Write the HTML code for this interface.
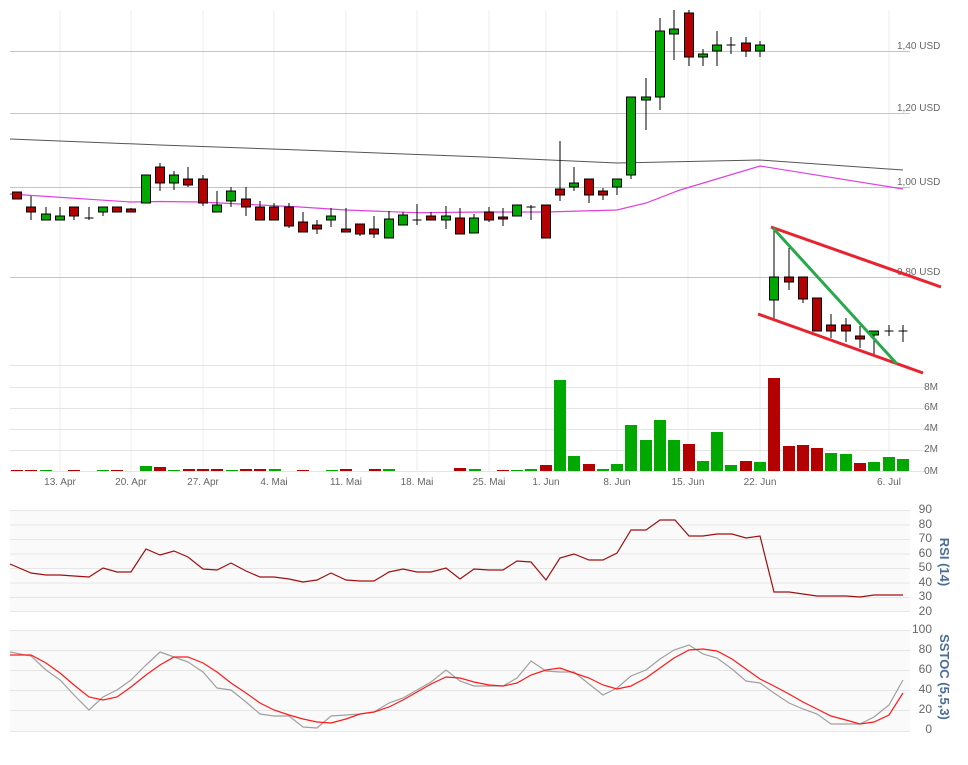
<!DOCTYPE html>
<html><head><meta charset="utf-8"><style>
html,body{margin:0;padding:0;background:#fff;width:968px;height:765px;overflow:hidden}
svg{display:block;font-family:"Liberation Sans",sans-serif}
</style></head><body>
<svg width="968" height="765" viewBox="0 0 968 765" xmlns="http://www.w3.org/2000/svg">
<!-- vertical grid -->
<g stroke="#ececec" stroke-width="1">
<line x1="60" y1="10" x2="60" y2="472"/><line x1="131" y1="10" x2="131" y2="472"/><line x1="203" y1="10" x2="203" y2="472"/><line x1="274" y1="10" x2="274" y2="472"/><line x1="346" y1="10" x2="346" y2="472"/><line x1="417" y1="10" x2="417" y2="472"/><line x1="489" y1="10" x2="489" y2="472"/><line x1="546" y1="10" x2="546" y2="472"/><line x1="617" y1="10" x2="617" y2="472"/><line x1="688" y1="10" x2="688" y2="472"/><line x1="760" y1="10" x2="760" y2="472"/><line x1="889" y1="10" x2="889" y2="472"/>
</g>
<!-- horizontal grid main -->
<g stroke="#c4c4c4" stroke-width="1">
<line x1="10" y1="51.5" x2="910" y2="51.5"/><line x1="10" y1="113.5" x2="910" y2="113.5"/><line x1="10" y1="187.5" x2="910" y2="187.5"/><line x1="10" y1="277.5" x2="910" y2="277.5"/>
</g>
<g stroke="#e4e4e4" stroke-width="1">
<line x1="10" y1="365.5" x2="910" y2="365.5"/><line x1="10" y1="387.5" x2="926" y2="387.5"/><line x1="10" y1="408.5" x2="926" y2="408.5"/><line x1="10" y1="429.5" x2="926" y2="429.5"/><line x1="10" y1="450.5" x2="926" y2="450.5"/><line x1="10" y1="471.5" x2="926" y2="471.5"/>
</g>
<!-- axis labels -->
<g fill="#666" font-size="10">
<text x="897" y="49">1,40 USD</text><text x="897" y="111">1,20 USD</text><text x="897" y="185">1,00 USD</text><text x="897" y="275">0,80 USD</text>
</g>
<g fill="#666" font-size="10" text-anchor="end">
<text x="938" y="390">8M</text><text x="938" y="410">6M</text><text x="938" y="431">4M</text><text x="938" y="452">2M</text><text x="938" y="474">0M</text>
</g>
<g fill="#666" font-size="10" text-anchor="middle">
<text x="60" y="485">13. Apr</text><text x="131" y="485">20. Apr</text><text x="203" y="485">27. Apr</text><text x="274" y="485">4. Mai</text><text x="346" y="485">11. Mai</text><text x="417" y="485">18. Mai</text><text x="489" y="485">25. Mai</text><text x="546" y="485">1. Jun</text><text x="617" y="485">8. Jun</text><text x="688" y="485">15. Jun</text><text x="760" y="485">22. Jun</text><text x="889" y="485">6. Jul</text>
</g>
<!-- moving averages -->
<polyline fill="none" stroke="#555" stroke-width="1" points="10,139 160,145 300,150 484,157 617,163 760,160 903,170"/>
<polyline fill="none" stroke="#e040e0" stroke-width="1.2" points="10,194 131,202 160,201.5 200,202 300,207 346,210 417,212.7 484,212 546,212 617,210 646,203 680,190 760,166 903,189"/>
<!-- wicks -->
<g stroke="#000" stroke-width="1">
<line x1="31" y1="196" x2="31" y2="220"/><line x1="46" y1="207" x2="46" y2="220"/><line x1="60" y1="207" x2="60" y2="220"/><line x1="74" y1="207" x2="74" y2="220"/><line x1="89" y1="207" x2="89" y2="220"/><line x1="103" y1="207" x2="103" y2="216"/><line x1="131" y1="208" x2="131" y2="212"/><line x1="160" y1="163" x2="160" y2="191"/><line x1="174" y1="171" x2="174" y2="190"/><line x1="188" y1="167" x2="188" y2="187"/><line x1="203" y1="175" x2="203" y2="206"/><line x1="217" y1="191" x2="217" y2="212"/><line x1="231" y1="187" x2="231" y2="207"/><line x1="246" y1="187" x2="246" y2="216"/><line x1="260" y1="201" x2="260" y2="220"/><line x1="274" y1="203" x2="274" y2="220"/><line x1="289" y1="203" x2="289" y2="228"/><line x1="303" y1="212" x2="303" y2="232"/><line x1="317" y1="220" x2="317" y2="234"/><line x1="331" y1="208" x2="331" y2="227"/><line x1="346" y1="208" x2="346" y2="232"/><line x1="360" y1="224" x2="360" y2="236"/><line x1="374" y1="216" x2="374" y2="238"/><line x1="389" y1="211" x2="389" y2="238"/><line x1="403" y1="212" x2="403" y2="225"/><line x1="417" y1="204" x2="417" y2="225"/><line x1="431" y1="212" x2="431" y2="220"/><line x1="446" y1="206" x2="446" y2="229"/><line x1="460" y1="208" x2="460" y2="234"/><line x1="474" y1="214" x2="474" y2="233"/><line x1="489" y1="207" x2="489" y2="222"/><line x1="503" y1="208" x2="503" y2="226"/><line x1="531" y1="205" x2="531" y2="220"/><line x1="560" y1="141" x2="560" y2="201"/><line x1="574" y1="167" x2="574" y2="191"/><line x1="589" y1="179" x2="589" y2="203"/><line x1="603" y1="188" x2="603" y2="200"/><line x1="617" y1="179" x2="617" y2="195"/><line x1="631" y1="97" x2="631" y2="179"/><line x1="646" y1="78" x2="646" y2="130"/><line x1="660" y1="18" x2="660" y2="110"/><line x1="674" y1="10" x2="674" y2="60"/><line x1="689" y1="10" x2="689" y2="66"/><line x1="703" y1="49" x2="703" y2="66"/><line x1="717" y1="31" x2="717" y2="66"/><line x1="731" y1="37" x2="731" y2="54"/><line x1="746" y1="37" x2="746" y2="57"/><line x1="760" y1="41" x2="760" y2="57"/><line x1="774" y1="228" x2="774" y2="320"/><line x1="789" y1="248" x2="789" y2="290"/><line x1="803" y1="277" x2="803" y2="303"/><line x1="831" y1="314" x2="831" y2="338"/><line x1="846" y1="318" x2="846" y2="342"/><line x1="860" y1="326" x2="860" y2="348"/><line x1="874" y1="331" x2="874" y2="355"/><line x1="889" y1="325" x2="889" y2="336"/><line x1="903" y1="325" x2="903" y2="342"/>
<line x1="84.5" y1="218" x2="93.5" y2="218"/><line x1="412.5" y1="220" x2="421.5" y2="220"/><line x1="526.5" y1="207" x2="535.5" y2="207"/><line x1="726.5" y1="45" x2="735.5" y2="45"/><line x1="884.5" y1="331" x2="893.5" y2="331"/><line x1="898.5" y1="331" x2="907.5" y2="331"/>
</g>
<!-- bodies red -->
<g fill="#b30000" stroke="#000" stroke-width="1">
<rect x="12.5" y="192" width="9" height="7"/><rect x="26.5" y="207" width="9" height="5"/><rect x="69.5" y="207" width="9" height="9"/><rect x="112.5" y="207" width="9" height="5"/><rect x="126.5" y="209" width="9" height="3"/><rect x="155.5" y="167" width="9" height="16"/><rect x="183.5" y="179" width="9" height="6"/><rect x="198.5" y="179" width="9" height="24"/><rect x="241.5" y="199" width="9" height="8"/><rect x="255.5" y="207" width="9" height="13"/><rect x="269.5" y="207" width="9" height="13"/><rect x="284.5" y="207" width="9" height="19"/><rect x="298.5" y="222" width="9" height="10"/><rect x="312.5" y="225" width="9" height="4"/><rect x="341.5" y="229" width="9" height="3"/><rect x="355.5" y="224" width="9" height="10"/><rect x="369.5" y="229" width="9" height="5"/><rect x="426.5" y="216" width="9" height="4"/><rect x="455.5" y="218" width="9" height="16"/><rect x="484.5" y="212" width="9" height="8"/><rect x="498.5" y="217" width="9" height="2"/><rect x="541.5" y="205" width="9" height="33"/><rect x="555.5" y="189" width="9" height="6"/><rect x="584.5" y="179" width="9" height="16"/><rect x="598.5" y="191" width="9" height="4"/><rect x="684.5" y="13" width="9" height="44"/><rect x="741.5" y="43" width="9" height="8"/><rect x="784.5" y="277" width="9" height="5"/><rect x="798.5" y="277" width="9" height="22"/><rect x="812.5" y="298" width="9" height="33"/><rect x="826.5" y="325" width="9" height="6"/><rect x="841.5" y="325" width="9" height="6"/><rect x="855.5" y="336" width="9" height="3"/>
</g>
<!-- bodies green -->
<g fill="#00a800" stroke="#000" stroke-width="1">
<rect x="41.5" y="214" width="9" height="6"/><rect x="55.5" y="216" width="9" height="4"/><rect x="98.5" y="207" width="9" height="5"/><rect x="141.5" y="175" width="9" height="28"/><rect x="169.5" y="175" width="9" height="8"/><rect x="212.5" y="205" width="9" height="7"/><rect x="226.5" y="191" width="9" height="10"/><rect x="326.5" y="216" width="9" height="4"/><rect x="384.5" y="219" width="9" height="19"/><rect x="398.5" y="215" width="9" height="10"/><rect x="441.5" y="216" width="9" height="4"/><rect x="469.5" y="218" width="9" height="15"/><rect x="512.5" y="205" width="9" height="11"/><rect x="569.5" y="183" width="9" height="4"/><rect x="612.5" y="179" width="9" height="8"/><rect x="626.5" y="97" width="9" height="78"/><rect x="641.5" y="97" width="9" height="3"/><rect x="655.5" y="31" width="9" height="66"/><rect x="669.5" y="29" width="9" height="5"/><rect x="698.5" y="54" width="9" height="3"/><rect x="712.5" y="45" width="9" height="6"/><rect x="755.5" y="45" width="9" height="6"/><rect x="769.5" y="277" width="9" height="23"/><rect x="869.5" y="331" width="9" height="4"/>
</g>
<!-- trend lines -->
<line x1="771" y1="227" x2="941" y2="287" stroke="#e8222e" stroke-width="3"/>
<line x1="758" y1="314" x2="923" y2="373" stroke="#e8222e" stroke-width="3"/>
<line x1="773" y1="228" x2="897" y2="364" stroke="#27a84a" stroke-width="3"/>
<!-- volume -->
<g fill="#00a800">
<rect x="40" y="470" width="12" height="1"/><rect x="97" y="470" width="12" height="1"/><rect x="140" y="466" width="12" height="5"/><rect x="168" y="470" width="12" height="1"/><rect x="226" y="470" width="12" height="1"/><rect x="269" y="469" width="12" height="2"/><rect x="326" y="470" width="12" height="1"/><rect x="383" y="469" width="12" height="2"/><rect x="469" y="469" width="12" height="2"/><rect x="511" y="470" width="12" height="1"/><rect x="525" y="469" width="12" height="2"/>
<rect x="554" y="380" width="12" height="91"/><rect x="568" y="456" width="12" height="15"/><rect x="597" y="469" width="12" height="2"/><rect x="611" y="464" width="12" height="7"/><rect x="625" y="425" width="12" height="46"/><rect x="640" y="440" width="12" height="31"/><rect x="654" y="420" width="12" height="51"/><rect x="668" y="440" width="12" height="31"/><rect x="697" y="461" width="12" height="10"/><rect x="711" y="432" width="12" height="39"/><rect x="725" y="465" width="12" height="6"/><rect x="754" y="462" width="12" height="9"/><rect x="825" y="453" width="12" height="18"/><rect x="840" y="454" width="12" height="17"/><rect x="868" y="462" width="12" height="9"/><rect x="883" y="457" width="12" height="14"/><rect x="897" y="459" width="12" height="12"/>
</g>
<g fill="#b30000">
<rect x="11" y="470" width="12" height="1"/><rect x="25" y="470" width="12" height="1"/><rect x="68" y="470" width="12" height="1"/><rect x="111" y="470" width="12" height="1"/><rect x="154" y="467" width="12" height="4"/><rect x="183" y="469" width="12" height="2"/><rect x="197" y="469" width="12" height="2"/><rect x="211" y="469" width="12" height="2"/><rect x="240" y="469" width="12" height="2"/><rect x="254" y="469" width="12" height="2"/><rect x="297" y="470" width="12" height="1"/><rect x="340" y="469" width="12" height="2"/><rect x="369" y="469" width="12" height="2"/><rect x="454" y="468" width="12" height="3"/><rect x="497" y="470" width="12" height="1"/>
<rect x="540" y="465" width="12" height="6"/><rect x="583" y="464" width="12" height="7"/><rect x="683" y="444" width="12" height="27"/><rect x="740" y="461" width="12" height="10"/><rect x="768" y="378" width="12" height="93"/><rect x="783" y="446" width="12" height="25"/><rect x="797" y="445" width="12" height="26"/><rect x="811" y="448" width="12" height="23"/><rect x="854" y="463" width="12" height="8"/>
</g>
<!-- RSI panel -->
<rect x="10" y="510" width="900" height="102" fill="#fafafa"/>
<g stroke="#e6e6e6" stroke-width="1">
<line x1="10" y1="510.5" x2="910" y2="510.5"/><line x1="10" y1="525" x2="910" y2="525"/><line x1="10" y1="539.5" x2="910" y2="539.5"/><line x1="10" y1="554" x2="910" y2="554"/><line x1="10" y1="568.5" x2="910" y2="568.5"/><line x1="10" y1="583" x2="910" y2="583"/><line x1="10" y1="597.5" x2="910" y2="597.5"/><line x1="10" y1="611.5" x2="910" y2="611.5"/>
</g>
<g fill="#666" font-size="12" text-anchor="end">
<text x="932" y="513">90</text><text x="932" y="528">80</text><text x="932" y="542">70</text><text x="932" y="557">60</text><text x="932" y="571">50</text><text x="932" y="586">40</text><text x="932" y="600">30</text><text x="932" y="615">20</text>
</g>
<text transform="translate(940,562) rotate(90)" text-anchor="middle" fill="#4a6d9a" font-size="13" font-weight="bold">RSI (14)</text>
<polyline fill="none" stroke="#a01010" stroke-width="1.2" points="10,564 31,573 46,575 60,575 74,576 89,577 103,568 117,572 131,572 146,549 160,555 174,551 188,557 203,569 217,570 231,563 246,571 260,577 274,577 289,579 303,582 317,580 331,573 346,580 360,581 374,581 389,572 403,569 417,572 431,572 446,568 460,579 474,569 489,570 503,570 517,561 531,562 546,580 560,558 574,554 589,560 603,560 617,553 631,530 646,530 660,520 675,520 689,536 703,536 717,534 732,534 746,538 760,536 774,592 789,592 803,594 817,596 831,596 846,596 860,597 874,595 889,595 903,595"/>
<!-- SSTOC panel -->
<rect x="10" y="630" width="900" height="101" fill="#fafafa"/>
<g stroke="#e6e6e6" stroke-width="1">
<line x1="10" y1="630.5" x2="910" y2="630.5"/><line x1="10" y1="650.5" x2="910" y2="650.5"/><line x1="10" y1="670.5" x2="910" y2="670.5"/><line x1="10" y1="690.5" x2="910" y2="690.5"/><line x1="10" y1="710.5" x2="910" y2="710.5"/><line x1="10" y1="731.5" x2="910" y2="731.5"/>
</g>
<g fill="#666" font-size="12" text-anchor="end">
<text x="932" y="633">100</text><text x="932" y="653">80</text><text x="932" y="673">60</text><text x="932" y="693">40</text><text x="932" y="713">20</text><text x="932" y="733">0</text>
</g>
<text transform="translate(940,677) rotate(90)" text-anchor="middle" fill="#4a6d9a" font-size="13" font-weight="bold">SSTOC (5,5,3)</text>
<polyline fill="none" stroke="#a0a0a0" stroke-width="1.2" points="10,652 31,656 46,670 60,680 74,695 89,710 103,697 117,690 131,680 146,665 160,652 174,657 188,662 203,672 217,688 231,690 246,702 260,714 274,716 289,716 303,727 317,728 331,716 346,715 360,714 374,712 389,703 403,698 417,690 431,682 446,670 460,681 474,686 489,686 503,686 517,678 531,661 546,671 560,672 574,672 589,684 603,695 617,688 631,676 646,670 660,659 674,650 689,645 703,654 717,658 732,669 746,681 760,683 774,693 789,703 803,709 817,714 831,724 846,724 860,724 874,717 889,705 903,680"/>
<polyline fill="none" stroke="#ff1a1a" stroke-width="1.2" points="10,655 31,655 46,663 60,673 74,685 89,697 103,700 117,697 131,687 146,675 160,665 174,657 188,657 203,663 217,672 231,683 246,693 260,703 274,710 289,715 303,719 317,722 331,723 346,719 360,714 374,712 389,707 403,700 417,692 431,684 446,677 460,678 474,682 489,685 503,686 517,683 531,675 546,670 560,668 574,673 589,678 603,685 617,689 631,686 646,678 660,668 674,658 689,650 703,649 717,651 732,659 746,669 760,679 774,686 789,694 803,702 817,709 831,716 846,720 860,724 874,722 889,715 903,693"/>
</svg>
</body></html>
